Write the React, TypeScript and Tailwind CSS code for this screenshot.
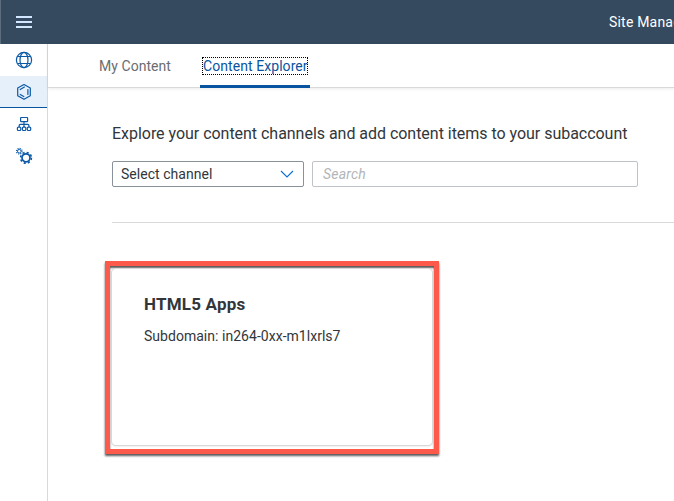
import type { ReactNode } from "react";

function NavItem({ active, children }: { active?: boolean; children: ReactNode }) {
  return (
    <button
      className={
        active
          ? "flex h-8 w-full items-center justify-center border-b border-[#0854a0] bg-[#e5f0fa] pt-px"
          : "flex h-8 w-full items-center justify-center"
      }
    >
      {children}
    </button>
  );
}

function GlobeIcon() {
  return (
    <svg width="18" height="18" viewBox="0 0 18 18" fill="none" stroke="#0b59a6" strokeWidth="1.2">
      <circle cx="9" cy="9" r="7.6" />
      <ellipse cx="9" cy="9" rx="4" ry="7.6" />
      <path d="M2.3 5.5h13.4M2.3 12.5h13.4" />
    </svg>
  );
}

function ProductIcon() {
  return (
    <svg width="16" height="18" viewBox="0 0 16 18" fill="none" stroke="#0b59a6" strokeWidth="1.2" strokeLinejoin="round" strokeLinecap="round">
      <path d="M8 1.6l6.3 3.5v7.6L8 16.3l-6.3-3.6V5.1z" />
      <path d="M4.2 6.5l4.2-2.4M11.9 6.6v4.8M4.2 11.4l3.6 2.1" />
    </svg>
  );
}

function OrgIcon() {
  return (
    <svg width="16" height="16" viewBox="0 0 16 16" fill="none" stroke="#0b59a6" strokeWidth="1.2">
      <rect x="4.6" y="1.5" width="7" height="4.2" rx="0.6" />
      <path d="M8 5.7v5.2M3.2 11V9.6q0-1.2 1.2-1.2h7.3q1.2 0 1.2 1.2V11" />
      <rect x="1.4" y="11.1" width="3.4" height="3.4" rx="1" />
      <rect x="6.4" y="11.1" width="3.4" height="3.4" rx="1" />
      <rect x="11.3" y="11.1" width="3.4" height="3.4" rx="1" />
    </svg>
  );
}

function GearsIcon() {
  return (
    <svg width="18" height="18" viewBox="0 0 18 18" fill="none" stroke="#0b59a6">
      <circle cx="4.3" cy="4.2" r="1.8" strokeWidth="1" />
      <circle cx="4.3" cy="4.2" r="2.8" strokeWidth="1.2" strokeDasharray="1.1 1.1" />
      <circle cx="11" cy="10.8" r="4" strokeWidth="1.7" />
      <circle cx="11" cy="10.8" r="5.4" strokeWidth="1.6" strokeDasharray="2.12 2.12" />
    </svg>
  );
}

export default function App() {
  return (
    <div className="flex h-[501px] w-[674px] flex-col overflow-hidden bg-white font-[Roboto,'Liberation_Sans',sans-serif] text-[14px] text-[#32363a]">
      <header className="flex h-11 shrink-0 items-center border-l border-[#5c6d7e] bg-[#354a5f] pl-[15px]">
        <svg className="shrink-0" width="16" height="12" viewBox="0 0 16 12" fill="#d1e8ff" aria-label="Menu">
          <path d="M0 0h16v2H0zM0 5h16v2H0zM0 10h16v2H0z" />
        </svg>
        <span className="ml-[577px] shrink-0 whitespace-nowrap tracking-[0.2px] text-white">Site Manag</span>
      </header>
      <div className="flex min-h-0 flex-1">
        <nav className="flex w-12 shrink-0 flex-col border-r border-[#d9d9d9]">
          <NavItem><GlobeIcon /></NavItem>
          <NavItem active><ProductIcon /></NavItem>
          <NavItem><OrgIcon /></NavItem>
          <NavItem><GearsIcon /></NavItem>
        </nav>
        <main className="flex min-w-0 flex-1 flex-col">
          <div className="flex h-11 shrink-0 border-b border-[#d9d9d9] pl-[51px] shadow-[0_1px_3px_rgba(0,0,0,0.08)]">
            <span className="mt-3 h-5 w-[101px] whitespace-nowrap leading-5 tracking-[0.05px] text-[#6a6d70]">My Content</span>
            <div className="flex h-11 w-[110px] flex-col items-center border-b-[3px] border-[#0854a0] pt-[13px]">
              <span className="h-[18px] w-[106px] whitespace-nowrap border border-dotted border-black text-center leading-[17px] tracking-[0.07px] text-[#0854a0]">Content Explorer</span>
            </div>
          </div>
          <div className="flex flex-col pl-16">
            <h1 className="mt-9 h-5 whitespace-nowrap text-[16px] leading-5 tracking-[-0.03px]">Explore your content channels and add content items to your subaccount</h1>
            <div className="mt-[17px] flex h-[26px] gap-2">
              <div className="flex w-48 items-center justify-between rounded-[2px] border border-[#89919a] pr-[9px] pl-2">
                <span className="tracking-[0.03px]">Select channel</span>
                <svg width="14" height="8" viewBox="0 0 14 8" fill="none" stroke="#0a6ed1" strokeWidth="1.1"><path d="M1 1l6 6 6-6" /></svg>
              </div>
              <div className="flex w-[326px] items-center rounded-[2px] border border-[#bfc3c8] pl-[10px] tracking-[0.2px] text-[#b3b5b7] italic">Search</div>
            </div>
            <div className="mt-[35px] border-t border-[#d9d9d9]" />
            <section className="mt-[38px] -ml-[7px] flex h-[193px] w-[334px] border-[5px] border-[#fd5a4c] px-[2px] pt-[3px] pb-[4px] shadow-[0_2px_2px_rgba(0,0,0,0.65),inset_0_2px_2px_rgba(0,0,0,0.65)]">
              <article className="w-full rounded-[4px] bg-white pt-[23px] pl-8 shadow-[0_0_0_1px_#d9d9d9,0_1px_2px_rgba(0,0,0,0.2)]">
                <h2 className="h-6 text-[17px] leading-6 font-bold tracking-[0.2px]">HTML5 Apps</h2>
                <p className="mt-[10px] h-5 leading-5 tracking-[0.03px]">Subdomain: in264-0xx-m1lxrls7</p>
              </article>
            </section>
          </div>
        </main>
      </div>
    </div>
  );
}
